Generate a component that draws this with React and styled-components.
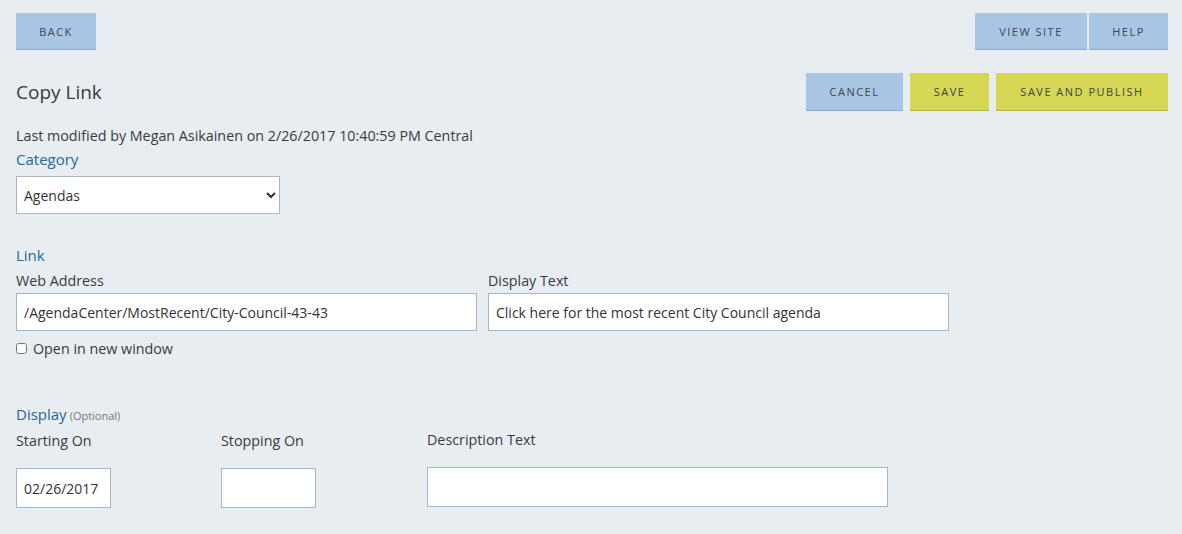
import React from "react";
import styled, { createGlobalStyle } from "styled-components";

const Global = createGlobalStyle`
  html, body { margin: 0; padding: 0; background: #e8edf2; }
  body { font-family: "Open Sans", "Lato", sans-serif; color: #3a3a3a; }
  * { box-sizing: border-box; }
`;

const Page = styled.div`
  padding: 13px 14px 20px 16px;
  width: 1182px;
  min-height: 534px;
`;

const TopBar = styled.div`
  display: flex;
  justify-content: space-between;
  align-items: flex-start;
`;

const ButtonGroup = styled.div`
  display: flex;
  gap: ${(p) => p.$gap ?? 2}px;
`;

const Button = styled.button`
  height: ${(p) => p.$h || 37}px;
  width: ${(p) => p.$w}px;
  border: none;
  border-bottom: 1px solid ${(p) => (p.$yellow ? "#b4b644" : "#8eaccb")};
  background: ${(p) => (p.$yellow ? "#d5d755" : "#a8c6e3")};
  color: #3f4450;
  font-family: "Open Sans", sans-serif;
  font-size: 11px;
  letter-spacing: 1.5px;
  text-transform: uppercase;
  padding: 0;
  cursor: pointer;
`;

const HeaderRow = styled.div`
  margin-top: 23px;
  display: flex;
  justify-content: space-between;
  align-items: center;
`;

const Title = styled.h1`
  margin: 0;
  font-size: 19px;
  font-weight: 400;
  color: #3a3a3a;
`;

const Meta = styled.div`
  margin-top: 16px;
  font-size: 14.3px;
  line-height: 18px;
`;

const SectionTitle = styled.div`
  color: #26679a;
  font-size: 15px;
  line-height: 20px;
  margin-top: ${(p) => p.$mt ?? 0}px;
`;

const Optional = styled.span`
  color: #777;
  font-size: 11px;
  margin-left: 3px;
`;

const Label = styled.div`
  font-size: 14.3px;
  line-height: 18px;
  margin-bottom: ${(p) => p.$mb ?? 4}px;
`;

const Select = styled.select`
  display: block;
  width: 264px;
  height: 38px;
  border: 1px solid #a9b5c2;
  background: #fff;
  font-family: "Open Sans", sans-serif;
  font-size: 14px;
  color: #333;
  padding: 0 3px;
  border-radius: 0;
  margin-top: 7px;
`;

const Input = styled.input`
  width: ${(p) => p.$w || 461}px;
  height: ${(p) => p.$h || 38}px;
  border: 1px solid #a9b5c2;
  background: #fff;
  font-family: "Open Sans", sans-serif;
  font-size: 14px;
  color: #333;
  padding: 0 7px;
  border-radius: 0;
  outline: none;
`;

const FieldRow = styled.div`
  display: flex;
  gap: ${(p) => p.$gap ?? 11}px;
  margin-top: ${(p) => p.$mt ?? 0}px;
`;

const Field = styled.div`
  display: flex;
  flex-direction: column;
  flex: none;
  width: ${(p) => p.$w}px;
  margin-top: ${(p) => p.$mt ?? 0}px;
`;

const CheckRow = styled.label`
  display: flex;
  align-items: center;
  gap: 6px;
  margin-top: 8px;
  font-size: 14.3px;
`;

const Check = styled.input`
  margin: 0;
  width: 11px;
  height: 11px;
`;

export default function App() {
  return (
    <>
      <Global />
      <Page>
        <TopBar>
          <Button $w={80}>Back</Button>
          <ButtonGroup $gap={2}>
            <Button $w={112}>View Site</Button>
            <Button $w={79}>Help</Button>
          </ButtonGroup>
        </TopBar>

        <HeaderRow>
          <Title>Copy Link</Title>
          <ButtonGroup $gap={7}>
            <Button $w={97} $h={38}>Cancel</Button>
            <Button $w={79} $h={38} $yellow>Save</Button>
            <Button $w={172} $h={38} $yellow>Save and Publish</Button>
          </ButtonGroup>
        </HeaderRow>

        <Meta>Last modified by Megan Asikainen on 2/26/2017 10:40:59 PM Central</Meta>
        <SectionTitle $mt={4}>Category</SectionTitle>
        <Select defaultValue="Agendas">
          <option>Agendas</option>
        </Select>

        <SectionTitle $mt={31}>Link</SectionTitle>
        <FieldRow $mt={7}>
          <Field $w={461}>
            <Label $mb={3}>Web Address</Label>
            <Input defaultValue="/AgendaCenter/MostRecent/City-Council-43-43" />
          </Field>
          <Field $w={461}>
            <Label $mb={3}>Display Text</Label>
            <Input defaultValue="Click here for the most recent City Council agenda" />
          </Field>
        </FieldRow>
        <CheckRow>
          <Check type="checkbox" />
          Open in new window
        </CheckRow>

        <SectionTitle $mt={46}>
          Display<Optional>(Optional)</Optional>
        </SectionTitle>
        <FieldRow $mt={6} $gap={0}>
          <Field $w={205}>
            <Label $mb={18}>Starting On</Label>
            <Input $w={95} $h={40} defaultValue="02/26/2017" />
          </Field>
          <Field $w={206}>
            <Label $mb={18}>Stopping On</Label>
            <Input $w={95} $h={40} />
          </Field>
          <Field $w={461} $mt={-1}>
            <Label $mb={18}>Description Text</Label>
            <Input $w={461} $h={40} />
          </Field>
        </FieldRow>
      </Page>
    </>
  );
}
